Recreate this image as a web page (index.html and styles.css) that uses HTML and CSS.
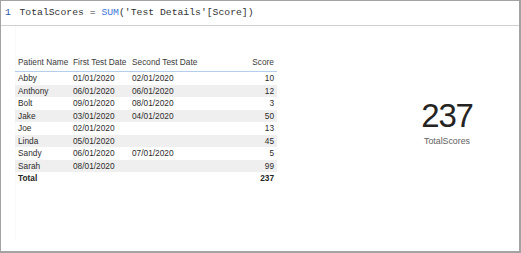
FILE: index.html
```html
<!DOCTYPE html>
<html>
<head>
<meta charset="utf-8">
<link rel="stylesheet" href="styles.css">
</head>
<body>
<div class="frame">
  <div class="formula">
    <span class="ln">1</span><span class="code">TotalScores = <span class="fn">SUM</span>('Test Details'[Score])</span>
  </div>
  <div class="canvas">
    <div class="visual">
      <div class="tbl">
        <div class="row head"><span>Patient Name</span><span>First Test Date</span><span>Second Test Date</span><span class="num">Score</span></div>
        <div class="row"><span>Abby</span><span>01/01/2020</span><span>02/01/2020</span><span class="num">10</span></div>
        <div class="row alt"><span>Anthony</span><span>06/01/2020</span><span>06/01/2020</span><span class="num">12</span></div>
        <div class="row"><span>Bolt</span><span>09/01/2020</span><span>08/01/2020</span><span class="num">3</span></div>
        <div class="row alt"><span>Jake</span><span>03/01/2020</span><span>04/01/2020</span><span class="num">50</span></div>
        <div class="row"><span>Joe</span><span>02/01/2020</span><span></span><span class="num">13</span></div>
        <div class="row alt"><span>Linda</span><span>05/01/2020</span><span></span><span class="num">45</span></div>
        <div class="row"><span>Sandy</span><span>06/01/2020</span><span>07/01/2020</span><span class="num">5</span></div>
        <div class="row alt"><span>Sarah</span><span>08/01/2020</span><span></span><span class="num">99</span></div>
        <div class="row total"><span>Total</span><span></span><span></span><span class="num">237</span></div>
      </div>
    </div>
    <div class="card">
      <div class="big">237</div>
      <div class="label">TotalScores</div>
    </div>
  </div>
</div>
</body>
</html>
```

FILE: styles.css
```css
html, body {
  margin: 0;
  padding: 0;
  background: #ffffff;
}
.frame {
  width: 518px;
  height: 250px;
  border: 1px solid #a3a3a3;
  border-right-width: 2px;
  border-bottom-width: 2px;
  display: flex;
  flex-direction: column;
  font-family: "Liberation Sans", Arial, sans-serif;
}
.formula {
  border-bottom: 1px solid #cfcfcf;
  display: flex;
  align-items: center;
  padding-left: 4px;
  font-family: "Liberation Mono", "DejaVu Sans Mono", monospace;
  font-size: 9.75px;
  color: #333333;
  white-space: pre;
  box-sizing: border-box;
  height: 25px;
  padding-bottom: 2px;
}
.ln {
  color: #2b5aa8;
  width: 14.5px;
}
.fn {
  color: #3c78d8;
}
.canvas {
  flex: 1;
  display: flex;
}
.visual {
  margin-left: 14px;
  padding-top: 27px;
  width: 261px;
  border-left: 1px solid #f9f9f9;
  margin-bottom: 11px;
}
.tbl {
  font-size: 8.3px;
  color: #2d2c2b;
  margin-left: -1px;
}
.row {
  display: grid;
  grid-template-columns: 55px 59px 1fr 40px;
  padding: 0 3px;
  height: 12.5px;
  line-height: 12.5px;
  white-space: nowrap;
}
.row.head {
  height: 19px;
  line-height: 18px;
  color: #3b3a39;
  border-bottom: 1px solid #b3cfec;
  box-sizing: border-box;
}
.row.alt {
  background: #efefef;
}
.row.total {
  font-weight: bold;
  color: #252423;
}
.num {
  text-align: right;
}
.card {
  margin-left: auto;
  width: 144px;
  display: flex;
  flex-direction: column;
  align-items: center;
  padding-top: 73px;
}
.big {
  font-size: 33px;
  line-height: 34px;
  letter-spacing: -1.2px;
  color: #252423;
}
.label {
  margin-top: 3px;
  font-size: 8.8px;
  line-height: 11px;
  color: #605e5c;
}
```
